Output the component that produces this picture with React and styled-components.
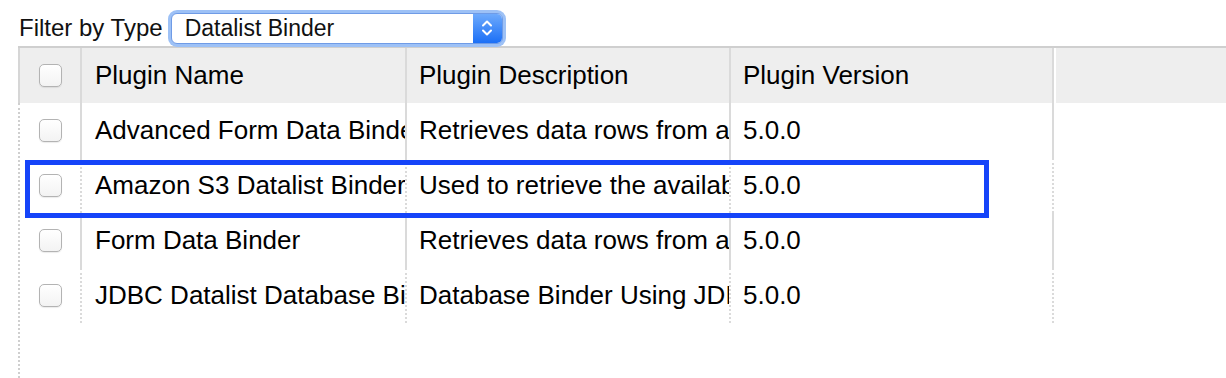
import React from "react";
import styled, { createGlobalStyle } from "styled-components";

const Global = createGlobalStyle`
  html, body { margin: 0; padding: 0; background: #fff; overflow: hidden; }
  body { font-family: "Liberation Sans", Arial, Helvetica, sans-serif; color: #000; }
`;

const Page = styled.div`
  position: relative;
  width: 1226px;
  height: 378px;
  overflow: hidden;
`;

const Toolbar = styled.div`
  box-sizing: border-box;
  display: flex;
  align-items: center;
  height: 46px;
  padding: 10px 0 0 19px;
  gap: 8px;
`;

const Label = styled.span`
  font-size: 24px;
  line-height: 1;
  color: #111;
`;

const SelectBox = styled.div`
  display: flex;
  align-items: stretch;
  box-sizing: border-box;
  width: 332px;
  height: 31px;
  border: 1px solid #6f9be6;
  border-radius: 6px;
  box-shadow: 0 0 0 3px #9dc1f6;
  background: #fff;
  overflow: hidden;
`;

const SelectText = styled.span`
  flex: 1;
  display: flex;
  align-items: center;
  padding-left: 13px;
  font-size: 23px;
  color: #111;
`;

const SelectButton = styled.span`
  width: 29px;
  display: flex;
  align-items: center;
  justify-content: center;
  background: linear-gradient(#6eaafc, #1b6ff6);
`;

const Grid = styled.div`
  margin-left: 18px;
  border-top: 2px solid #cfcfcf;
`;

const HeaderRow = styled.div`
  display: flex;
  height: 55px;
  border-left: 2px solid #d6d6d6;
`;

const HeaderCell = styled.div`
  box-sizing: border-box;
  flex: 0 0 ${(p) => p.$w}px;
  display: flex;
  align-items: center;
  justify-content: ${(p) => (p.$center ? "center" : "flex-start")};
  padding-left: ${(p) => p.$pad || 0}px;
  background: #eeeeee;
  border-right: 2px solid #dadada;
  font-size: 26px;
  white-space: nowrap;
  overflow: hidden;
`;

const HeaderFiller = styled.div`
  flex: 1;
  margin-left: 2px;
  background: #eeeeee;
`;

const Body = styled.div`
  height: 275px;
  border-left: 2px dotted #cfcfcf;
`;

const Row = styled.div`
  display: flex;
  height: 55px;
`;

const Cell = styled.div`
  box-sizing: border-box;
  flex: 0 0 ${(p) => p.$w}px;
  display: flex;
  align-items: center;
  justify-content: ${(p) => (p.$center ? "center" : "flex-start")};
  padding-left: ${(p) => p.$pad || 0}px;
  border-right: 2px ${(p) => (p.$dotted ? "dotted" : "solid")} #dadada;
  font-size: 26px;
  white-space: nowrap;
  overflow: hidden;
`;

const Check = styled.span`
  box-sizing: border-box;
  width: 23px;
  height: 23px;
  border: 1px solid #b3b3b3;
  border-radius: 5px;
  background: linear-gradient(#ffffff, #f3f3f3);
  box-shadow: 0 1px 1px rgba(0, 0, 0, 0.08);
`;

const Annotation = styled.div`
  position: absolute;
  left: 25px;
  top: 160px;
  width: 964px;
  height: 58px;
  box-sizing: border-box;
  border: 5px solid #1544f9;
  pointer-events: none;
`;

const Chevrons = () => (
  <svg width="14" height="20" viewBox="0 0 14 20" fill="none">
    <path d="M3 7.5 L7 3.5 L11 7.5" stroke="#fff" strokeWidth="2" strokeLinecap="round" strokeLinejoin="round" />
    <path d="M3 12.5 L7 16.5 L11 12.5" stroke="#fff" strokeWidth="2" strokeLinecap="round" strokeLinejoin="round" />
  </svg>
);

const columns = [
  { key: "check", w: 62, center: true },
  { key: "name", w: 325, pad: 13, title: "Plugin Name" },
  { key: "desc", w: 324, pad: 12, title: "Plugin Description" },
  { key: "version", w: 323, pad: 12, title: "Plugin Version" },
];

const rows = [
  { name: "Advanced Form Data Binder", desc: "Retrieves data rows from a form table.", version: "5.0.0" },
  { name: "Amazon S3 Datalist Binder", desc: "Used to retrieve the available files from Amazon S3.", version: "5.0.0" },
  { name: "Form Data Binder", desc: "Retrieves data rows from a form table.", version: "5.0.0" },
  { name: "JDBC Datalist Database Binder", desc: "Database Binder Using JDBC", version: "5.0.0" },
];

export default function App() {
  return (
    <Page>
      <Global />
      <Toolbar>
        <Label>Filter by Type</Label>
        <SelectBox>
          <SelectText>Datalist Binder</SelectText>
          <SelectButton>
            <Chevrons />
          </SelectButton>
        </SelectBox>
      </Toolbar>
      <Grid>
        <HeaderRow>
          {columns.map((c) => (
            <HeaderCell key={c.key} $w={c.w} $pad={c.pad} $center={c.center}>
              {c.key === "check" ? <Check /> : c.title}
            </HeaderCell>
          ))}
          <HeaderFiller />
        </HeaderRow>
        <Body>
          {rows.map((r, i) => (
            <Row key={r.name}>
              {columns.map((c) => (
                <Cell key={c.key} $w={c.w} $pad={c.pad} $center={c.center} $dotted={i % 2 === 1}>
                  {c.key === "check" ? <Check /> : r[c.key]}
                </Cell>
              ))}
            </Row>
          ))}
        </Body>
      </Grid>
      <Annotation />
    </Page>
  );
}
